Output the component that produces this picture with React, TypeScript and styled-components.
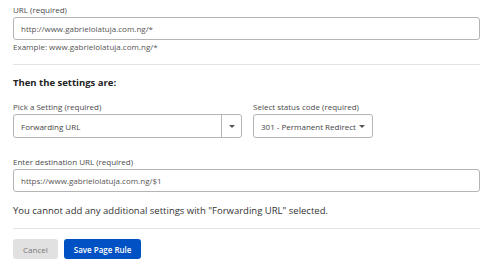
import styled, { createGlobalStyle } from 'styled-components'

const Global = createGlobalStyle`
  body {
    margin: 0;
    background: #fff;
    font-family: 'Open Sans', 'Noto Sans', sans-serif;
    color: #333;
  }
`

function App() {
  return (
    <Page>
      <Global />
      <Label>URL (required)</Label>
      <TextInput defaultValue="http://www.gabrielolatuja.com.ng/*" />
      <Hint>Example: www.gabrielolatuja.com.ng/*</Hint>
      <Divider />
      <Heading>Then the settings are:</Heading>
      <Row>
        <Field>
          <Label>Pick a Setting (required)</Label>
          <SettingSelect>
            <span>Forwarding URL</span>
            <Caret $split>
              <Arrow />
            </Caret>
          </SettingSelect>
        </Field>
        <Field>
          <Label>Select status code (required)</Label>
          <StatusSelect>
            <span>301 - Permanent Redirect</span>
            <Arrow />
          </StatusSelect>
        </Field>
      </Row>
      <Label $top={18}>Enter destination URL (required)</Label>
      <TextInput defaultValue="https://www.gabrielolatuja.com.ng/$1" />
      <Message>
        You cannot add any additional settings with "Forwarding URL" selected.
      </Message>
      <Divider $top={11} />
      <Actions>
        <Button>Cancel</Button>
        <Button $primary>Save Page Rule</Button>
      </Actions>
    </Page>
  )
}

export default App

const Page = styled.div`
  width: 467px;
  padding: 4px 0 0 13px;
`

const Label = styled.div<{ $top?: number }>`
  font-size: 8px;
  line-height: 11px;
  color: #4a4a4a;
  margin-top: ${(p) => p.$top ?? 0}px;
  margin-bottom: 2px;
`

const TextInput = styled.input`
  display: block;
  box-sizing: border-box;
  width: 100%;
  height: 23px;
  padding: 0 7px;
  border: 1px solid #b5b5b5;
  border-radius: 3px;
  font-family: inherit;
  font-size: 8px;
  color: #555;
  outline: none;
`

const Hint = styled.div`
  font-size: 8px;
  line-height: 11px;
  color: #555;
  margin-top: 1px;
`

const Divider = styled.hr<{ $top?: number }>`
  border: 0;
  border-top: 1px solid #e3e3e3;
  margin: ${(p) => p.$top ?? 12}px 0 0;
`

const Heading = styled.div`
  font-size: 9.5px;
  font-weight: 700;
  color: #222;
  line-height: 13px;
  margin: 11px 0 12px;
`

const Row = styled.div`
  display: flex;
  gap: 11px;
`

const Field = styled.div`
  display: flex;
  flex-direction: column;
`

const SelectBase = styled.div`
  box-sizing: border-box;
  height: 24px;
  display: flex;
  align-items: center;
  border: 1px solid #b5b5b5;
  border-radius: 3px;
  font-size: 8px;
  color: #444;
`

const SettingSelect = styled(SelectBase)`
  width: 229px;
  padding-left: 7px;
  justify-content: space-between;
`

const StatusSelect = styled(SelectBase)`
  width: 120px;
  padding: 0 5px 0 7px;
  gap: 3px;
`

const Caret = styled.div<{ $split?: boolean }>`
  width: 19px;
  height: 100%;
  display: flex;
  align-items: center;
  justify-content: center;
  border-left: ${(p) => (p.$split ? '1px solid #b5b5b5' : '0')};
`

const Arrow = styled.i`
  width: 0;
  height: 0;
  border-left: 3px solid transparent;
  border-right: 3px solid transparent;
  border-top: 3px solid #555;
`

const Message = styled.div`
  font-size: 9.5px;
  line-height: 13px;
  color: #333;
  margin-top: 12px;
`

const Actions = styled.div`
  display: flex;
  gap: 6px;
  margin-top: 10px;
`

const Button = styled.button<{ $primary?: boolean }>`
  height: 20px;
  padding: 0 10px;
  border: 0;
  border-radius: 3px;
  font-family: inherit;
  font-size: 8px;
  font-weight: ${(p) => (p.$primary ? 600 : 400)};
  background: ${(p) => (p.$primary ? '#0051c3' : '#e1e1e1')};
  color: ${(p) => (p.$primary ? '#fff' : '#777')};
  cursor: pointer;
`
